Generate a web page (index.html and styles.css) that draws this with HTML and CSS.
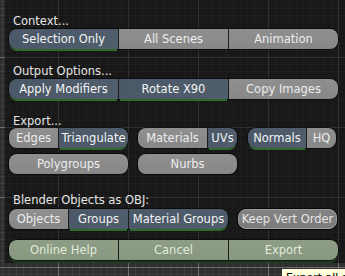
FILE: index.html
```html
<!DOCTYPE html>
<html>
<head>
<meta charset="utf-8">
<link rel="stylesheet" href="styles.css">
</head>
<body>
<div class="panel">
  <div class="label first">Context...</div>
  <div class="row">
    <div class="seg w329">
      <div class="btn blue sel">Selection Only</div>
      <div class="btn grey">All Scenes</div>
      <div class="btn grey">Animation</div>
    </div>
  </div>

  <div class="label">Output Options...</div>
  <div class="row">
    <div class="seg w329">
      <div class="btn blue sel">Apply Modifiers</div>
      <div class="btn blue sel">Rotate X90</div>
      <div class="btn grey">Copy Images</div>
    </div>
  </div>

  <div class="label tight">Export...</div>
  <div class="row">
    <div class="seg">
      <div class="btn grey b49">Edges</div>
      <div class="btn blue sel b69">Triangulate</div>
    </div>
    <div class="seg g10">
      <div class="btn grey b69">Materials</div>
      <div class="btn blue sel b29">UVs</div>
    </div>
    <div class="seg g11">
      <div class="btn blue sel b58">Normals</div>
      <div class="btn grey b29">HQ</div>
    </div>
  </div>
  <div class="row r4">
    <div class="seg">
      <div class="btn grey b119">Polygroups</div>
    </div>
    <div class="seg g10">
      <div class="btn grey b99">Nurbs</div>
    </div>
  </div>

  <div class="label l4">Blender Objects as OBJ:</div>
  <div class="row">
    <div class="seg">
      <div class="btn grey b59">Objects</div>
      <div class="btn blue sel b59">Groups</div>
      <div class="btn blue sel b99">Material Groups</div>
    </div>
    <div class="seg g10">
      <div class="btn grey outline b99">Keep Vert Order</div>
    </div>
  </div>

  <div class="row r6">
    <div class="seg w329 greenrow">
      <div class="btn green">Online Help</div>
      <div class="btn green">Cancel</div>
      <div class="btn green">Export</div>
    </div>
  </div>
</div>
<div class="tooltip">Export all selected objects</div>
</body>
</html>
```

FILE: styles.css
```css
html, body {
  margin: 0;
  padding: 0;
  overflow: hidden;
  width: 345px;
  height: 276px;
}

body {
  position: relative;
  font-family: "DejaVu Sans", "Liberation Sans", sans-serif;
  font-size: 11.5px;
  background-color: #2f2f2f;
  background-image:
    linear-gradient(90deg, rgba(200,200,200,0.35) 1px, transparent 1px),
    linear-gradient(0deg, rgba(200,200,200,0.35) 1px, transparent 1px),
    linear-gradient(90deg, rgba(255,255,255,0.06) 1px, transparent 1px),
    linear-gradient(0deg, rgba(255,255,255,0.06) 1px, transparent 1px);
  background-size: 70px 70px, 70px 70px, 7px 7px, 7px 7px;
  background-position: 58px 0, 0 58px, 2px 0, 0 2px;
}

.panel {
  margin-left: 5px;
  height: 263px;
  box-sizing: border-box;
  padding: 15px 0 0 4px;
  background: rgba(12, 12, 12, 0.62);
}

.label {
  height: 13px;
  line-height: 13px;
  padding-left: 4px;
  margin: 16px 0 1px;
  color: #e6e6e6;
  white-space: nowrap;
}
.label.first { margin-top: 0; }
.label.tight { margin-bottom: 0; }
.label.l4 { margin-top: 20px; margin-bottom: 2px; }

.row {
  display: flex;
  height: 20px;
}
.row.r4 { margin-top: 6px; }
.row.r6 { margin-top: 11px; }

.seg {
  display: flex;
  gap: 1px;
  height: 20px;
  border-radius: 8px;
  background: #1c1c1c;
  box-shadow: 0 0 0 1px rgba(0,0,0,0.55);
}
.seg.w329 { width: 329px; }
.seg.g10 { margin-left: 10px; }
.seg.g11 { margin-left: 11px; }

.seg.greenrow {
  box-shadow: 0 0 0 1px rgba(0,0,0,0.55), 0 3px 0 0 #1e3a1d;
}

.btn {
  box-sizing: border-box;
  height: 20px;
  padding-top: 1px;
  line-height: 19px;
  text-align: center;
  white-space: nowrap;
  overflow: hidden;
}
.seg.w329 .btn { flex: 1; }
.btn:first-child { border-radius: 8px 0 0 8px; }
.btn:last-child { border-radius: 0 8px 8px 0; }
.btn:only-child { border-radius: 8px; }

.b29 { width: 29px; }
.b49 { width: 49px; }
.b58 { width: 58px; }
.b59 { width: 59px; }
.b69 { width: 69px; }
.b99 { width: 99px; }
.b119 { width: 119px; }

.grey {
  background: linear-gradient(#8f8f8f, #878787);
  color: #ededed;
}
.grey.outline {
  background: linear-gradient(#838383, #7b7b7b);
  border: 1px solid #9c9c9c;
  padding-top: 0;
  color: #e4e4e4;
}
.blue {
  background: linear-gradient(90deg, #4a5867, #4f5d6c);
  color: #f4f4f4;
}
.sel {
  box-shadow: 0 3px 0 -1px #2f6a2a;
}
.green {
  background: linear-gradient(#8e9e86, #879780);
  color: #e2eadb;
}

.tooltip {
  position: absolute;
  left: 282px;
  top: 269px;
  padding: 2px 4px;
  background: #ffffdc;
  color: #000;
  font-size: 11px;
  line-height: 14px;
  white-space: nowrap;
}
```
